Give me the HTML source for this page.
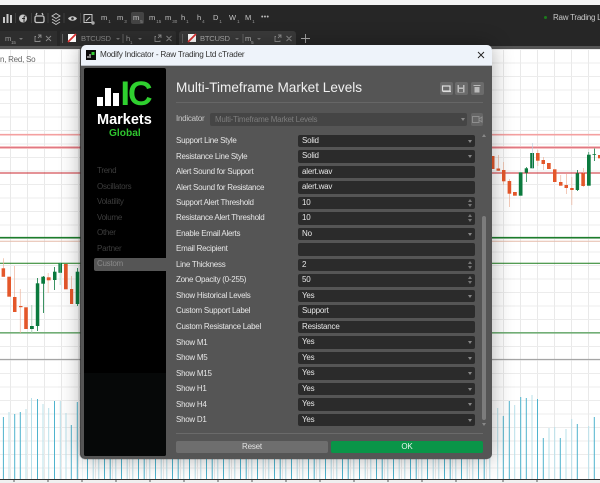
<!DOCTYPE html>
<html><head><meta charset="utf-8"><style>
html,body{margin:0;padding:0;width:600px;height:483px;overflow:hidden;background:#fff;font-family:"Liberation Sans",sans-serif}
#w{left:0;top:0;width:600px;height:483px;overflow:hidden;filter:blur(.35px)}
div,span,svg{position:absolute}
.t{white-space:nowrap;line-height:12px}
.tb{color:#c4c4c4;font-size:7.5px;top:12px}
.tb sub{font-size:4.5px;color:#999;vertical-align:-3px;margin-left:1px;line-height:0}
.tab{color:#999;font-size:7.6px;top:33px;letter-spacing:-.25px}
.tab sub{font-size:4.5px;vertical-align:-3px;line-height:0}
.lab{left:176px;color:#e6e6e6;font-size:8px;letter-spacing:-.27px}
.f{left:298px;width:177px;height:12.5px;background:#2b2b2b;border-radius:2px;color:#e6e6e6;font-size:8px;letter-spacing:-.2px;line-height:12.5px;text-indent:4px}
.f.s:after{content:"";position:absolute;right:3px;top:5px;border:2px solid transparent;border-top:3px solid #888;border-bottom:0}
.f.n:before{content:"";position:absolute;right:3px;top:2px;border:2px solid transparent;border-bottom:3px solid #777;border-top:0}
.f.n:after{content:"";position:absolute;right:3px;top:7px;border:2px solid transparent;border-top:3px solid #777;border-bottom:0}
.nav{left:97px;color:#3d3d3d;font-size:8px;letter-spacing:-.27px}
.ib{top:82px;width:13px;height:13px;background:#6b6b6b;border-radius:2px}
</style></head><body><div id="w">
<svg style="left:0;top:0" width="600" height="483" viewBox="0 0 600 483">
<defs>
<pattern id="vg" width="17" height="500" patternUnits="userSpaceOnUse" x="10"><rect x="0" width="1" height="500" fill="#e9e9e9"/></pattern>
<pattern id="hg" width="600" height="13.5" patternUnits="userSpaceOnUse" y="62.5"><rect y="0" width="600" height="1" fill="#ececec"/></pattern>
<pattern id="vol" width="34" height="40" patternUnits="userSpaceOnUse" x="1.5" y="440"><path d="M1 0V40M6.7 0V40M18 0V40" stroke="#4fb3cd" stroke-width="1"/><path d="M12.3 0V40M23.7 0V40M29.3 0V40" stroke="#b5dde8" stroke-width="1"/></pattern>
</defs>
<rect width="600" height="483" fill="#fff"/>
<rect width="600" height="483" fill="url(#vg)"/>
<rect width="600" height="483" fill="url(#hg)"/>
<g fill="none">
<path d="M0 134.7H600" stroke="#f4a0a0" stroke-width="1.6"/>
<path d="M0 147.5H600" stroke="#f6c0c0" stroke-width="3"/><path d="M0 147.5H600" stroke="#d86070" stroke-width=".8"/>
<path d="M0 173H600" stroke="#c8262e" stroke-width="1"/>
<path d="M0 237.7H600" stroke="#1c7d2c" stroke-width="1.6"/>
<path d="M0 241.3H600" stroke="#e6bcaa" stroke-width="1"/>
<path d="M0 263.3H600" stroke="#1c7d1c" stroke-width="1"/>
<path d="M0 332.8H600" stroke="#72ae76" stroke-width="1.6"/>
<path d="M0 359.5H600" stroke="#a5a5a5" stroke-width="1.2"/>
</g>
<!-- left candles -->
<g fill="#e4572a" stroke="none">
<path d="M3.1 258.3h.7v18h-.7zM14.1 266h.7v43h-.7zM19.9 289h.7v44h-.7zM47.8 273h.7v20h-.7zM65.4 264h.7v15h-.7zM71.1 276h.7v14h-.7z" fill="#eeb49c"/>
<rect x="1.6" y="268.3" width="3.5" height="8.5"/><rect x="7.3" y="276.7" width="3.7" height="20"/><rect x="13" y="297" width="3.5" height="15"/><rect x="19" y="306" width="3.5" height="1.2"/><rect x="24.2" y="307.3" width="3.6" height="21.7"/>
<rect x="46.8" y="277.3" width="3.8" height="3"/><rect x="64" y="264" width="3.7" height="25.3"/><rect x="70" y="289" width="3.2" height="15"/>
</g>
<g fill="#0b7a3e">
<path d="M31.4 305h.8v28h-.8z" fill="#9cc8ac"/>
<path d="M37.2 278h.8v53h-.8zM43 276h.8v37h-.8z" fill="#0b7a3e"/>
<rect x="30" y="326" width="3.8" height="3"/><rect x="35.8" y="283.3" width="3.5" height="42.7"/><rect x="41.3" y="276.7" width="3.7" height="7"/>
<rect x="53" y="271.7" width="3.5" height="8.3"/><path d="M54.1 267h.8v23h-.8z"/><rect x="58.4" y="263.3" width="3.6" height="9.5"/><path d="M59.8 262h.6v23h-.6z" fill="#8db"/>
<rect x="75.7" y="271.7" width="3.6" height="32.3"/><path d="M77 268h.8v38h-.8z"/>
</g>
<!-- right candles -->
<g fill="#e4572a">
<path d="M498 155h.7v16h-.7zM503.3 162h.7v23h-.7zM509 179h.7v28h-.7zM537.5 150h.7v16h-.7zM543 157h.7v13h-.7zM560.4 175h.7v10h-.7zM566 174h.7v20h-.7zM571.5 177h.7v28h-.7zM583 168h.7v19h-.7z" fill="#eeb49c"/>
<rect x="491.5" y="156" width="3" height="13"/><rect x="496.5" y="168.5" width="3.6" height="2.2"/><rect x="502" y="170" width="3.5" height="11.3"/><rect x="507.6" y="181" width="3.6" height="12.7"/><rect x="513" y="192" width="3.8" height="3.7"/>
<rect x="536" y="153" width="3.6" height="7.7"/><rect x="541.5" y="160" width="3.5" height="4"/><rect x="547" y="163" width="3.7" height="6"/><rect x="553" y="169.3" width="3.5" height="12.7"/><rect x="559" y="182" width="3.5" height="3.7"/><rect x="564.5" y="185" width="3.5" height="3"/><rect x="570.2" y="188" width="3.5" height="2"/><rect x="581.3" y="173.3" width="3.6" height="12.7"/><rect x="598" y="155" width="2" height="3.3"/>
</g>
<g fill="#0b7a3e">
<rect x="518.8" y="172.3" width="3.7" height="23.4"/><rect x="524.7" y="168.3" width="3.3" height="4.4"/><path d="M526 167h.7v15h-.7z"/><rect x="530.2" y="153" width="3.8" height="15.3"/><path d="M532 143h.6v26h-.6z" fill="#bcd"/>
<rect x="575.7" y="173.3" width="3.4" height="16.7"/><path d="M577 170h.8v21h-.8z"/><rect x="587" y="154.7" width="3.7" height="31"/><path d="M588.5 152h.6v3h-.6z"/><path d="M594 148.5h.8v12.5h-.8zM592.5 154h3.6v.8h-3.6z"/>
</g>
<!-- volume -->
<g stroke-width="1" fill="none">
<path d="M3.4 417V479M14.7 414V479M20.3 412V479M37.5 399V479M54.5 401V479M71.3 425V479M77.3 402V479M503.3 416V479M509.3 401V479M520.7 397V479M526.3 398V479M537.5 399V479M543.3 438V479M560.3 438V479M577.3 424V479M594.3 417V479" stroke="#4fb3cd"/>
<path d="M9 412V479M26 409V479M31.5 398V479M43 404V479M48.7 408V479M60.3 401V479M66 413V479M497.7 408V479M514.7 405V479M532 395V479M549 428V479M554.7 427V479M566 429V479M571.7 419V479M588.7 426V479" stroke="#b8e0ea"/>
</g>
<rect x="82" y="440" width="410" height="39" fill="url(#vol)"/>
<rect y="479" width="600" height="4" fill="#f0f0f0"/>
<rect y="479" width="600" height="1" fill="#333"/>
<path d="M14 479v3M48 479v3M82 479v3M116 479v3M150 479v3M184 479v3M218 479v3M252 479v3M286 479v3M320 479v3M354 479v3M388 479v3M422 479v3M456 479v3M503 479v3M537 479v3" stroke="#333" stroke-width=".8"/>
</svg>

<!-- top chrome -->
<div style="left:0;top:0;width:600px;height:5px;background:#f3f3f3"></div>
<div style="left:0;top:5px;width:600px;height:41px;background:#262626"></div>
<div style="left:0;top:46px;width:600px;height:3px;background:#555"></div>
<div class="t" style="left:0;top:54px;font-size:8px;letter-spacing:-.25px;color:#666">n, Red, So</div>

<svg style="left:0;top:10px" width="100" height="18" viewBox="0 0 100 18" fill="none" stroke="#c8c8c8" stroke-width="1.3">
<path d="M4 7v6M7.500 4v9M11 5v8" stroke-width="2"/>
<circle cx="23" cy="8.500" r="4" fill="#c8c8c8" stroke="none"/><path d="M24 12V7.500c0-1 .5-1.500 1.500-1.500M22 8.500h3" stroke="#262626" stroke-width="1"/>
<rect x="35" y="6" width="9" height="6.500" rx="1.500"/><path d="M36 5l1-2M43 5l-1-2"/>
<path d="M52 6l4-2.500L60 6l-4 2.500zM52 9l4 2.500L60 9M52 12l4 2.500L60 12" stroke-width=".9"/>
<path d="M68 8.500c2-3 7-3 9 0c-2 3-7 3-9 0z" fill="#c8c8c8" stroke="none"/><circle cx="72.500" cy="8.500" r="1.300" fill="#262626" stroke="none"/>
<rect x="84" y="4.500" width="8" height="8" stroke-width="1"/><path d="M86 11l4-4" stroke-width="1"/><circle cx="93" cy="13" r="1.700" fill="#aaa" stroke="none"/>
<path d="M15.500 3v10M31.500 3v10M48 3v10M64 3v10M80.500 3v10" stroke="#444" stroke-width=".8"/>
</svg>
<div style="left:131px;top:12px;width:13px;height:12px;background:#444;border-radius:2px"></div>
<div class="t tb" style="left:101px">m<sub>1</sub></div>
<div class="t tb" style="left:117px">m<sub>3</sub></div>
<div class="t tb" style="left:133px">m<sub>5</sub></div>
<div class="t tb" style="left:149px">m<sub>15</sub></div>
<div class="t tb" style="left:165px">m<sub>30</sub></div>
<div class="t tb" style="left:181px">h<sub>1</sub></div>
<div class="t tb" style="left:197px">h<sub>4</sub></div>
<div class="t tb" style="left:213px">D<sub>1</sub></div>
<div class="t tb" style="left:229px">W<sub>1</sub></div>
<div class="t tb" style="left:245px">M<sub>1</sub></div>
<div class="t" style="left:261px;top:12px;color:#bbb;font-size:7px;letter-spacing:.3px">•••</div>
<div style="left:544px;top:16px;width:3px;height:3px;border-radius:50%;background:#1c7a1c"></div>
<div class="t" style="left:553px;top:12px;color:#c8c8c8;font-size:8px;letter-spacing:-.25px">Raw Trading L</div>

<!-- tabs -->
<div style="left:0;top:31px;width:57px;height:15px;background:#2e2e2e"></div>
<div style="left:60px;top:31px;width:116px;height:15px;background:#2e2e2e;border-radius:2px 2px 0 0"></div>
<div style="left:179px;top:31px;width:117px;height:15px;background:#3a3a3a;border-radius:3px 3px 0 0"></div>
<div class="t tab" style="left:5px">m<sub>15</sub></div>
<div class="t tab" style="left:81px;color:#8a8a8a">BTCUSD</div>
<div class="t tab" style="left:126px">h<sub>1</sub></div>
<div class="t tab" style="left:200px;color:#aaa">BTCUSD</div>
<div class="t tab" style="left:245px;color:#bbb">m<sub>5</sub></div>
<svg style="left:0;top:31px" width="320" height="15" viewBox="0 0 320 15" fill="none" stroke="#8a8a8a" stroke-width=".9">
<path d="M19 7l2 2 2-2zM116 7l2 2 2-2zM138 7l2 2 2-2zM235 7l2 2 2-2zM257 7l2 2 2-2z" fill="#777" stroke="none"/>
<path d="M36 5.500h-1v5h5v-1M38 4h3v3M41 4l-3 3M156 5.500h-1v5h5v-1M158 4h3v3M161 4l-3 3M276 5.500h-1v5h5v-1M278 4h3v3M281 4l-3 3"/>
<path d="M46 5l5 5M51 5l-5 5M166.500 5l5 5M171.500 5l-5 5M286.500 5l5 5M291.500 5l-5 5"/>
<path d="M62.500 3v9M123 3v9M182.500 3v9M243 3v9" stroke="#666"/>
<rect x="68" y="3" width="8" height="8" fill="#fff" stroke="none"/><path d="M68 11l8-8" stroke="#d33" stroke-width="1.800"/>
<rect x="188" y="3" width="8" height="8" fill="#fff" stroke="none"/><path d="M188 11l8-8" stroke="#d33" stroke-width="1.800"/>
<path d="M301 7.500h9M305.500 3v9" stroke="#aaa"/>
</svg>

<!-- dialog -->
<div style="left:81px;top:45px;width:411px;height:414px;background:#555;border-radius:5px;box-shadow:-1px 0 1px #2a2a2a,0 0 22px rgba(0,0,0,.32);overflow:hidden">
<div style="left:0;top:0;width:411px;height:19.500px;background:#eef3fa;border-bottom:1px solid #bcc0c6"></div>
</div>
<svg style="left:86px;top:50px" width="10" height="10" viewBox="0 0 10 10"><rect width="10" height="10" fill="#0a0a0a"/><path d="M2 6v2M4 4v4" stroke="#fff"/><path d="M5.500 2h3v3h-3z" fill="#3c3"/></svg>
<div class="t" style="left:100px;top:49px;font-size:8.200px;letter-spacing:-.25px;color:#333">Modify Indicator - Raw Trading Ltd cTrader</div>
<svg style="left:476px;top:50px" width="10" height="10" viewBox="0 0 10 10"><path d="M2 2l6 6M8 2l-6 6" stroke="#222" stroke-width=".9"/></svg>

<!-- side panel -->
<div style="left:84px;top:68px;width:82px;height:388px;background:#000;border-radius:2px"></div>
<div style="left:84px;top:373px;width:82px;height:83px;background:#060808;border-radius:0 0 2px 2px"></div>
<div style="left:97px;top:97px;width:5.500px;height:8.500px;background:#fff"></div>
<div style="left:105px;top:88px;width:5.500px;height:17.500px;background:#fff"></div>
<div style="left:113px;top:93px;width:6px;height:12.500px;background:#fff"></div>
<div class="t" style="left:120.500px;top:77px;font-size:34px;line-height:34px;font-weight:bold;color:#2fd02f;letter-spacing:-2px">IC</div>
<div class="t" style="left:97px;top:113px;font-size:14.500px;line-height:15px;font-weight:bold;color:#fff">Markets</div>
<div class="t" style="left:109px;top:128px;font-size:10.200px;line-height:11px;font-weight:bold;color:#2fc42f">Global</div>
<div class="t nav" style="top:165px">Trend</div>
<div class="t nav" style="top:181px">Oscillators</div>
<div class="t nav" style="top:196px">Volatility</div>
<div class="t nav" style="top:212px">Volume</div>
<div class="t nav" style="top:227px">Other</div>
<div class="t nav" style="top:243px">Partner</div>
<div style="left:94px;top:258px;width:73px;height:12.500px;background:#555;border-radius:2px 0 0 2px"></div>
<div class="t nav" style="top:258px;color:#8a8a8a">Custom</div>

<!-- header -->
<div class="t" style="left:176px;top:79px;font-size:13.600px;line-height:18px;color:#f0f0f0">Multi-Timeframe Market Levels</div>
<div style="left:176px;top:102px;width:307px;height:1px;background:#666"></div>
<div class="ib" style="left:440px"></div><div class="ib" style="left:455px"></div><div class="ib" style="left:471px"></div>
<svg style="left:440px;top:82px" width="44" height="13" viewBox="0 0 44 13" fill="none" stroke="#ddd">
<rect x="2.500" y="4" width="7.500" height="5" stroke-width="1.200"/><path d="M3 9.500h8" stroke-width="1.200"/>
<rect x="17.500" y="3" width="7" height="7.500" fill="#bbb" stroke="none"/><rect x="19" y="3" width="4" height="2.500" fill="#6b6b6b" stroke="none"/><rect x="19" y="7" width="4" height="3" fill="#6b6b6b" stroke="none"/>
<path d="M33.500 3.500h7" stroke="#bbb"/><rect x="34.500" y="5" width="5" height="5.500" fill="#bbb" stroke="none"/>
</svg>
<div class="t" style="left:176px;top:113px;font-size:8px;letter-spacing:-.25px;color:#c8c8c8">Indicator</div>
<div style="left:210px;top:113px;width:257px;height:13px;background:#454545;border-radius:2px;color:#7c7c7c;font-size:8px;letter-spacing:-.25px;line-height:13px;text-indent:5px;white-space:nowrap">Multi-Timeframe Market Levels</div>
<div style="left:461px;top:118px;border:2px solid transparent;border-top:3px solid #888;border-bottom:0"></div>
<div style="left:471px;top:113px;width:12px;height:13px;background:#666;border-radius:2px"></div>
<svg style="left:471px;top:113px" width="12" height="13" viewBox="0 0 12 13" fill="none" stroke="#8e8e8e"><rect x="1.500" y="3.500" width="6.500" height="6"/><path d="M8 6l3-2v5l-3-2z"/></svg>

<!-- form -->
<div class="t lab" style="top:135px">Support Line Style</div><div class="f s" style="top:134.700px">Solid</div>
<div class="t lab" style="top:150.500px">Resistance Line Style</div><div class="f s" style="top:150.300px">Solid</div>
<div class="t lab" style="top:166px">Alert Sound for Support</div><div class="f" style="top:165.800px">alert.wav</div>
<div class="t lab" style="top:181.500px">Alert Sound for Resistance</div><div class="f" style="top:181.300px">alert.wav</div>
<div class="t lab" style="top:197px">Support Alert Threshold</div><div class="f n" style="top:196.800px">10</div>
<div class="t lab" style="top:212px">Resistance Alert Threshold</div><div class="f n" style="top:212.200px">10</div>
<div class="t lab" style="top:227.500px">Enable Email Alerts</div><div class="f s" style="top:227.700px">No</div>
<div class="t lab" style="top:243px">Email Recipient</div><div class="f" style="top:243.200px"></div>
<div class="t lab" style="top:258.500px">Line Thickness</div><div class="f n" style="top:258.700px">2</div>
<div class="t lab" style="top:274px">Zone Opacity (0-255)</div><div class="f n" style="top:274.200px">50</div>
<div class="t lab" style="top:289.500px">Show Historical Levels</div><div class="f s" style="top:289.700px">Yes</div>
<div class="t lab" style="top:305px">Custom Support Label</div><div class="f" style="top:305.200px">Support</div>
<div class="t lab" style="top:321px">Custom Resistance Label</div><div class="f" style="top:320.700px">Resistance</div>
<div class="t lab" style="top:336.500px">Show M1</div><div class="f s" style="top:336.200px">Yes</div>
<div class="t lab" style="top:352px">Show M5</div><div class="f s" style="top:351.700px">Yes</div>
<div class="t lab" style="top:367.500px">Show M15</div><div class="f s" style="top:367.200px">Yes</div>
<div class="t lab" style="top:383px">Show H1</div><div class="f s" style="top:382.700px">Yes</div>
<div class="t lab" style="top:398.500px">Show H4</div><div class="f s" style="top:398.200px">Yes</div>
<div class="t lab" style="top:414px">Show D1</div><div class="f s" style="top:413.700px">Yes</div>

<!-- scrollbar -->
<div style="left:482px;top:134px;border:2px solid transparent;border-bottom:3px solid #888;border-top:0"></div>
<div style="left:482px;top:216px;width:4px;height:204px;background:#7c7c7c;border-radius:2px"></div>
<div style="left:482px;top:423px;border:2px solid transparent;border-top:3px solid #888;border-bottom:0"></div>

<!-- footer -->
<div style="left:176px;top:433px;width:307px;height:1px;background:#6a6a6a"></div>
<div style="left:176px;top:441px;width:152px;height:12px;background:#6e6e6e;border-radius:2px;color:#e0e0e0;font-size:8px;letter-spacing:-.2px;line-height:12px;text-align:center">Reset</div>
<div style="left:331px;top:441px;width:152px;height:12px;background:#0a9548;border-radius:2px;color:#e6f5ec;font-size:8px;letter-spacing:-.2px;line-height:12px;text-align:center">OK</div>
</div></body></html>
